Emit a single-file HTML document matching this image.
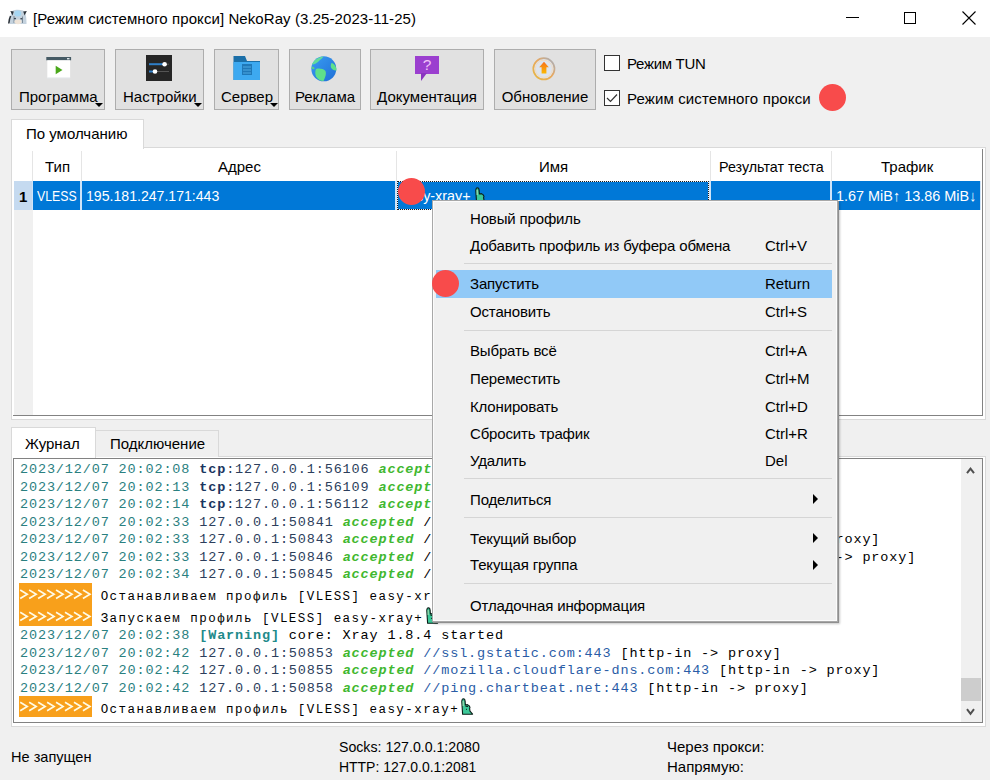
<!DOCTYPE html>
<html><head><meta charset="utf-8">
<style>
*{box-sizing:border-box;margin:0;padding:0}
html,body{width:990px;height:780px;overflow:hidden;background:#f0f0f0;font-family:"Liberation Sans",sans-serif;font-size:15px;color:#000}
.a{position:absolute}
.t{position:absolute;white-space:pre;line-height:1}
#title{left:0;top:0;width:990px;height:37px;background:#fff}
.btn{position:absolute;top:49px;height:61px;background:#e1e1e1;border:1px solid #adadad}
.btn .lbl{position:absolute;left:0;right:0;top:38px;text-align:center;white-space:pre;line-height:17px;color:#000}
.arr{position:absolute;width:0;height:0;border-left:4px solid transparent;border-right:4px solid transparent;border-top:4px solid #000}
.cb{position:absolute;left:604px;width:16px;height:16px;border:1px solid #333;background:#fff}
.hdr{position:absolute;top:151px;height:30px;border-left:1px solid #e5e5e5}
.cell{position:absolute;top:181px;height:29px;background:#0078d7;color:#fff}
.menu{position:absolute;left:432px;top:200px;width:406px;height:422px;background:#f0f0f0;border:1px solid #a8a8a8;box-shadow:inset 1px 1px 0 #fbfbfb,inset -1px -1px 0 #fbfbfb,1px 1px 0 #8f8f8f,2px 2px 2px rgba(0,0,0,0.22)}
.mi{position:absolute;left:37px;white-space:pre;line-height:17px;letter-spacing:-0.15px}
.sc{position:absolute;left:332px;white-space:pre;line-height:17px}
.sep{position:absolute;left:31px;width:368px;height:1px;background:#d5d5d5}
.sub{position:absolute;left:380px;width:0;height:0;border-top:5px solid transparent;border-bottom:5px solid transparent;border-left:5.5px solid #000}
.log{font-family:"Liberation Mono",monospace;font-size:13.5px;letter-spacing:0.86px}
.ru{font-size:12.5px;letter-spacing:1.46px}
.ln{position:absolute;left:20px;white-space:pre;line-height:17.5px;height:17.5px}
.ts{color:#2a8080}
.ip{color:#2c3e5c}
.ac{color:#40b830;font-weight:bold;font-style:italic}
.dm{color:#2a5ca6}
.tcp{color:#1a3560;font-weight:bold}
.warn{color:#218a8a;font-weight:bold}
.or{position:absolute;left:19px;width:73px;background:#f8a01b}
.chev{position:absolute;left:19px;white-space:pre;color:#fff4c0;line-height:21px}
</style></head><body>

<!-- title bar -->
<div id="title" class="a">
  <svg class="a" style="left:0;top:0" width="32" height="32" viewBox="0 0 32 32">
    <path d="M10 24 C10 18 10.5 12 13 10.5 C15 9.5 20 9.5 23 10.5 C26 12 26.5 18 26.5 24 Z" fill="#c4d2de"/>
    <ellipse cx="17.8" cy="13.5" rx="3.5" ry="3" fill="#a6d6f2"/>
    <path d="M10.3 11 L13.8 11.5 L12.5 15.5 Z" fill="#2b323a"/>
    <path d="M26.8 11 L23.2 11.5 L24.6 15.5 Z" fill="#2b323a"/>
    <path d="M10.6 16 C9.6 18 9 20.5 8.8 23.5" stroke="#2b323a" stroke-width="1.6" fill="none"/>
    <path d="M14 16 V23 M22.5 16.5 V23" stroke="#7a8a98" stroke-width="1" fill="none"/>
    <ellipse cx="18" cy="21.8" rx="3.6" ry="2.4" fill="#efe4d8"/>
    <ellipse cx="15" cy="18.6" rx="1.1" ry="0.8" fill="#3a4450"/>
    <ellipse cx="21.3" cy="18.8" rx="1.1" ry="0.8" fill="#3a4450"/>
  </svg>
  <div class="t" style="left:33px;top:11px;color:#000;letter-spacing:0.08px">[Режим системного прокси] NekoRay (3.25-2023-11-25)</div>
  <div class="a" style="left:846px;top:17px;width:13px;height:1px;background:#000"></div>
  <div class="a" style="left:904px;top:12px;width:12px;height:12px;border:1px solid #000"></div>
  <svg class="a" style="left:962px;top:11px" width="14" height="14" viewBox="0 0 14 14"><path d="M0.5 0.5 L13.5 13.5 M13.5 0.5 L0.5 13.5" stroke="#000" stroke-width="1.1"/></svg>
</div>

<!-- toolbar buttons -->
<div class="btn" style="left:11px;width:94px">
  <svg class="a" style="left:33.5px;top:6.8px" width="26" height="23" viewBox="0 0 26 23">
    <rect x="0.3" y="0" width="24.8" height="3.3" fill="#455a64"/>
    <rect x="21" y="1" width="2.5" height="1.4" fill="#dfe6ea"/>
    <rect x="1.3" y="3.3" width="22.8" height="18" fill="#fff"/>
    <rect x="1.3" y="20.6" width="22.8" height="0.8" fill="#d8dde0"/>
    <path d="M9.7 8.8 L16.5 13 L9.7 17.3 Z" fill="#4aa81a"/>
  </svg>
  <div class="lbl" style="left:0;right:auto;width:94px;text-align:left;padding-left:7px">Программа</div>
  <div class="arr" style="left:83px;top:53px"></div>
</div>
<div class="btn" style="left:115px;width:89px">
  <svg class="a" style="left:30px;top:5px" width="26" height="26" viewBox="0 0 26 26">
    <rect width="26" height="26" fill="#262626"/>
    <path d="M3 9.2 H19" stroke="#2f7fc8" stroke-width="2"/>
    <path d="M19 9.2 H23" stroke="#555" stroke-width="1"/>
    <circle cx="18.6" cy="9.2" r="2.3" fill="#fff"/>
    <path d="M3 16.5 H9" stroke="#2f7fc8" stroke-width="2"/>
    <path d="M9 16.5 H23" stroke="#555" stroke-width="1"/>
    <circle cx="9" cy="16.5" r="2.3" fill="#fff"/>
  </svg>
  <div class="lbl" style="text-align:left;padding-left:7px">Настройки</div>
  <div class="arr" style="left:78px;top:53px"></div>
</div>
<div class="btn" style="left:214px;width:65px">
  <svg class="a" style="left:18px;top:6px" width="28" height="25" viewBox="0 0 28 25">
    <path d="M0.5 0 H12 L14 5 H27 V24 H0.5 Z" fill="#1b6fa8"/>
    <rect x="0.5" y="6" width="26.5" height="18" fill="#3da9f0"/>
    <rect x="9" y="8" width="10" height="11" fill="#1f78b8"/>
    <path d="M10 11 H18 M10 14 H18 M10 17 H18" stroke="#5ab6ee" stroke-width="0.8"/>
  </svg>
  <div class="lbl" style="text-align:left;padding-left:6px">Сервер</div>
  <div class="arr" style="left:55px;top:53px"></div>
</div>
<div class="btn" style="left:289px;width:72px">
  <svg class="a" style="left:21px;top:5.5px" width="26" height="26" viewBox="0 0 26 26">
    <defs><linearGradient id="gb" x1="0" y1="0" x2="1" y2="1"><stop offset="0" stop-color="#3a9cf2"/><stop offset="1" stop-color="#1f6fd6"/></linearGradient></defs>
    <circle cx="12.8" cy="12.8" r="12.5" fill="url(#gb)"/>
    <path d="M1 8.5 C2.5 4.5 7 1 12.5 0.5 C11 2.5 9 4 7.5 5.5 C6 7 4 8.5 1 8.5 Z" fill="#62dc9a"/>
    <path d="M1 10.5 C2.5 10.5 4 11.5 3.5 13 C2.5 13.5 1.2 13 0.5 12.5 Z" fill="#55d08a"/>
    <path d="M5 13 C8 12 12 12.5 14.5 15 C15.5 17.5 14.5 21 12.5 25 C9 25 6.5 23 5 20.5 C4 18 4 15 5 13 Z" fill="#5fe08a"/>
    <path d="M20.5 7 C23 7.5 25.5 10.5 25.5 14.5 C23.5 15 21 13.5 20 11.5 C19.5 10 19.8 8 20.5 7 Z" fill="#5fe08a"/>
  </svg>
  <div class="lbl" style="text-align:center">Реклама</div>
</div>
<div class="btn" style="left:370px;width:114px">
  <svg class="a" style="left:44px;top:6px" width="26" height="26" viewBox="0 0 26 26">
    <rect x="0" y="0" width="24" height="18" fill="#9b3fcf"/>
    <path d="M6 17 L6 25 L12 17 Z" fill="#8a35c0"/>
    <text x="12" y="14" font-family="Liberation Sans" font-size="15.5" fill="#f0c4f8" text-anchor="middle">?</text>
  </svg>
  <div class="lbl" style="text-align:center">Документация</div>
</div>
<div class="btn" style="left:494px;width:102px">
  <svg class="a" style="left:36.5px;top:6.5px" width="24" height="24" viewBox="0 0 24 24">
    <defs><linearGradient id="ga" x1="0" y1="0" x2="0" y2="1"><stop offset="0" stop-color="#f7701e"/><stop offset="1" stop-color="#fcb900"/></linearGradient>
    <linearGradient id="gr" x1="1" y1="0" x2="0" y2="1"><stop offset="0" stop-color="#9fb0c8"/><stop offset="0.45" stop-color="#e8a860"/><stop offset="1" stop-color="#e8b840"/></linearGradient></defs>
    <circle cx="11.9" cy="11.8" r="10.6" fill="#dde4ee" stroke="url(#gr)" stroke-width="1.7"/>
    <circle cx="11.9" cy="11.8" r="8.6" fill="none" stroke="#f2dcc0" stroke-width="1"/>
    <path d="M12 4.8 L16.8 10.2 H14.4 V16.5 H9.6 V10.2 H7.2 Z" fill="url(#ga)"/>
  </svg>
  <div class="lbl" style="text-align:center">Обновление</div>
</div>

<!-- checkboxes -->
<div class="cb" style="top:55px"></div>
<div class="t" style="left:627px;top:56px;letter-spacing:-0.3px">Режим TUN</div>
<div class="cb" style="top:90px"><svg class="a" style="left:1px;top:2px" width="12" height="10" viewBox="0 0 12 10"><path d="M1 5 L4.5 8.5 L11 1.5" stroke="#333" stroke-width="1.2" fill="none"/></svg></div>
<div class="t" style="left:627px;top:91px;letter-spacing:0.13px">Режим системного прокси</div>
<div class="a" style="left:819px;top:84px;width:27px;height:27px;border-radius:50%;background:#f84b4b"></div>

<!-- profile tab -->
<div class="a" style="left:11px;top:147px;width:975px;height:273px;background:#fff;border:1px solid #d9d9d9"></div>
<div class="a" style="left:11px;top:119px;width:133px;height:30px;background:#fff;border:1px solid #d9d9d9;border-bottom:none"></div>
<div class="t" style="left:26px;top:126px">По умолчанию</div>

<!-- table -->
<div class="a" style="left:982px;top:149px;width:1px;height:267px;background:#828282"></div>
<div class="a" style="left:13px;top:415px;width:970px;height:1px;background:#828282"></div>
<div class="a" style="left:14px;top:210px;width:19px;height:205px;background:#f0f0f0"></div>
<div class="hdr" style="left:32px;width:49px"></div>
<div class="hdr" style="left:81px;width:315px"></div>
<div class="hdr" style="left:396px;width:314px"></div>
<div class="hdr" style="left:710px;width:121px"></div>
<div class="hdr" style="left:831px;width:150px"></div>
<div class="t" style="left:45px;top:158.5px">Тип</div>
<div class="t" style="left:218px;top:158.5px">Адрес</div>
<div class="t" style="left:539px;top:158.5px">Имя</div>
<div class="t" style="left:719px;top:158.5px;transform:scaleX(0.952);transform-origin:0 0">Результат теста</div>
<div class="t" style="left:881px;top:158.5px">Трафик</div>

<div class="a" style="left:14px;top:181px;width:19px;height:29px;background:#c5daf0"></div>
<div class="t" style="left:19px;top:189px;font-weight:bold">1</div>
<div class="a" style="left:32px;top:181px;width:949px;height:29px;background:#cfe4f8"></div>
<div class="cell" style="left:33px;width:47px"></div>
<div class="cell" style="left:82px;width:313px"></div>
<div class="cell" style="left:397px;width:312px;box-shadow:inset 0 0 0 1px #e6f0fa;outline:1px dotted #1a1a1a;outline-offset:-1px"></div>
<div class="cell" style="left:711px;width:119px"></div>
<div class="cell" style="left:832px;width:148px"></div>
<div class="t" style="left:37px;top:187.5px;color:#fff;transform:scaleX(0.82);transform-origin:0 0">VLESS</div>
<div class="t" style="left:86px;top:187.5px;color:#fff;transform:scaleX(0.94);transform-origin:0 0">195.181.247.171:443</div>
<div class="t" style="left:400px;top:187.5px;color:#fff;transform:scaleX(0.957);transform-origin:0 0">easy-xray+</div>
<svg class="a" style="left:473.5px;top:186.5px" width="14" height="17" viewBox="0 0 14 17"><path d="M2.6 16.2 L1.8 3.6 Q1.8 0.9 3.4 0.8 Q5 0.8 5.1 3.4 L5.4 7 L7.4 6.6 L9 7.6 L10 9.2 L9.6 10.6 L10 13.2 L12.6 16.2 Z" fill="#3cc898" stroke="#0b1e18" stroke-width="1.1" stroke-linejoin="round"/><path d="M3.2 3 V8" stroke="#9fdcb0" stroke-width="1.2"/></svg>
<div class="t" style="left:836px;top:187.5px;color:#fff;transform:scaleX(0.962);transform-origin:0 0">1.67 MiB<b>↑</b> 13.86 MiB<b>↓</b></div>
<div class="a" style="left:398px;top:178px;width:27px;height:27px;border-radius:50%;background:#f84b4b"></div>

<!-- log tabs -->
<div class="a" style="left:11px;top:456px;width:975px;height:271px;background:#fff;border:1px solid #d9d9d9"></div>
<div class="a" style="left:95px;top:430px;width:124px;height:27px;background:#f0f0f0;border:1px solid #d9d9d9;border-bottom:none"></div>
<div class="a" style="left:11px;top:427px;width:85px;height:31px;background:#fff;border:1px solid #d9d9d9;border-bottom:none"></div>
<div class="t" style="left:25px;top:436px">Журнал</div>
<div class="t" style="left:110px;top:436px">Подключение</div>

<!-- log text -->
<div class="a" style="left:13px;top:458px;width:970px;height:265px;background:#fff;border:1px solid #828282;overflow:hidden">
 <div class="a log" style="left:-14px;top:-459px;width:990px;height:780px">
<div class="ln" style="top:461.4px"><span class="ts">2023/12/07 20:02:08 </span><span class="tcp">tcp</span><span class="ip">:127.0.0.1:56106 </span><span class="ac">accepted</span></div>
<div class="ln" style="top:478.9px"><span class="ts">2023/12/07 20:02:13 </span><span class="tcp">tcp</span><span class="ip">:127.0.0.1:56109 </span><span class="ac">accepted</span></div>
<div class="ln" style="top:496.4px"><span class="ts">2023/12/07 20:02:14 </span><span class="tcp">tcp</span><span class="ip">:127.0.0.1:56112 </span><span class="ac">accepted</span></div>
<div class="ln" style="top:513.9px"><span class="ts">2023/12/07 20:02:33 </span><span class="ip">127.0.0.1:50841 </span><span class="ac">accepted</span> /</div>
<div class="ln" style="top:531.4px"><span class="ts">2023/12/07 20:02:33 </span><span class="ip">127.0.0.1:50843 </span><span class="ac">accepted</span> /                                             roxy]</div>
<div class="ln" style="top:548.9px"><span class="ts">2023/12/07 20:02:33 </span><span class="ip">127.0.0.1:50846 </span><span class="ac">accepted</span> /                                             -&gt; proxy]</div>
<div class="ln" style="top:566.4px"><span class="ts">2023/12/07 20:02:34 </span><span class="ip">127.0.0.1:50845 </span><span class="ac">accepted</span> /</div>
<div class="or" style="top:583px;height:42.7px"></div>
<div class="or" style="top:696.1px;height:20.6px"></div>
<svg class="a" style="left:0;top:0" width="990" height="780"><path d="M20.20 590.10 L27.20 594.30 L20.20 598.50 M29.16 590.10 L36.16 594.30 L29.16 598.50 M38.12 590.10 L45.12 594.30 L38.12 598.50 M47.08 590.10 L54.08 594.30 L47.08 598.50 M56.04 590.10 L63.04 594.30 L56.04 598.50 M65.00 590.10 L72.00 594.30 L65.00 598.50 M73.96 590.10 L80.96 594.30 L73.96 598.50 M82.92 590.10 L89.92 594.30 L82.92 598.50 " stroke="#fffbe6" stroke-width="1.7" fill="none"/></svg>
<svg class="a" style="left:0;top:0" width="990" height="780"><path d="M20.20 612.20 L27.20 616.40 L20.20 620.60 M29.16 612.20 L36.16 616.40 L29.16 620.60 M38.12 612.20 L45.12 616.40 L38.12 620.60 M47.08 612.20 L54.08 616.40 L47.08 620.60 M56.04 612.20 L63.04 616.40 L56.04 620.60 M65.00 612.20 L72.00 616.40 L65.00 620.60 M73.96 612.20 L80.96 616.40 L73.96 620.60 M82.92 612.20 L89.92 616.40 L82.92 620.60 " stroke="#fffbe6" stroke-width="1.7" fill="none"/></svg>
<svg class="a" style="left:0;top:0" width="990" height="780"><path d="M20.20 702.30 L27.20 706.50 L20.20 710.70 M29.16 702.30 L36.16 706.50 L29.16 710.70 M38.12 702.30 L45.12 706.50 L38.12 710.70 M47.08 702.30 L54.08 706.50 L47.08 710.70 M56.04 702.30 L63.04 706.50 L56.04 710.70 M65.00 702.30 L72.00 706.50 L65.00 710.70 M73.96 702.30 L80.96 706.50 L73.96 710.70 M82.92 702.30 L89.92 706.50 L82.92 710.70 " stroke="#fffbe6" stroke-width="1.7" fill="none"/></svg>
<div class="ln" style="top:587.5px"><span class="ru">         Останавливаем профиль [VLESS] easy-xr</span></div>
<div class="ln" style="top:609.5px"><span class="ru">         Запускаем профиль [VLESS] easy-xray+</span></div>
<svg class="a" style="left:425px;top:607px" width="14" height="17" viewBox="0 0 14 17"><path d="M2.6 16.2 L1.8 3.6 Q1.8 0.9 3.4 0.8 Q5 0.8 5.1 3.4 L5.4 7 L7.4 6.6 L9 7.6 L10 9.2 L9.6 10.6 L10 13.2 L12.6 16.2 Z" fill="#3cc898" stroke="#0b1e18" stroke-width="1.1" stroke-linejoin="round"/><path d="M3.2 3 V8" stroke="#9fdcb0" stroke-width="1.2"/><path d="M5.4 8.2 L8 8.6 M6 11 L7 11.6" stroke="#0b1e18" stroke-width="1"/></svg>
<div class="ln" style="top:626.6px"><span class="ts">2023/12/07 20:02:38 </span><span class="warn">[Warning]</span> core: Xray 1.8.4 started</div>
<div class="ln" style="top:644.5px"><span class="ts">2023/12/07 20:02:42 </span><span class="ip">127.0.0.1:50853 </span><span class="ac">accepted</span> <span class="dm">//ssl.gstatic.com:443</span> [http-in -&gt; proxy]</div>
<div class="ln" style="top:662.4px"><span class="ts">2023/12/07 20:02:42 </span><span class="ip">127.0.0.1:50855 </span><span class="ac">accepted</span> <span class="dm">//mozilla.cloudflare-dns.com:443</span> [http-in -&gt; proxy]</div>
<div class="ln" style="top:680.3px"><span class="ts">2023/12/07 20:02:42 </span><span class="ip">127.0.0.1:50858 </span><span class="ac">accepted</span> <span class="dm">//ping.chartbeat.net:443</span> [http-in -&gt; proxy]</div>
<div class="ln" style="top:700.5px"><span class="ru">         Останавливаем профиль [VLESS] easy-xray+</span></div>
<svg class="a" style="left:460px;top:698px" width="14" height="17" viewBox="0 0 14 17"><path d="M2.6 16.2 L1.8 3.6 Q1.8 0.9 3.4 0.8 Q5 0.8 5.1 3.4 L5.4 7 L7.4 6.6 L9 7.6 L10 9.2 L9.6 10.6 L10 13.2 L12.6 16.2 Z" fill="#3cc898" stroke="#0b1e18" stroke-width="1.1" stroke-linejoin="round"/><path d="M3.2 3 V8" stroke="#9fdcb0" stroke-width="1.2"/><path d="M5.4 8.2 L8 8.6 M6 11 L7 11.6" stroke="#0b1e18" stroke-width="1"/></svg>

 </div>
 <!-- scrollbar -->
 <div class="a" style="left:947px;top:0;width:21px;height:263px;background:#f0f0f0"></div>
 <div class="a" style="left:947px;top:219px;width:19.5px;height:22.8px;background:#cdcdcd"></div>
 <svg class="a" style="left:940px;top:0" width="30" height="263"><path d="M13 14.2 L16.5 9.6 L20 14.2 M13 250.2 L16.5 254.8 L20 250.2" stroke="#505050" stroke-width="2" fill="none"/></svg>
</div>

<!-- status bar -->
<div class="t" style="left:11px;top:748.5px;transform:scaleX(0.97);transform-origin:0 0">Не запущен</div>
<div class="t" style="left:339px;top:738.7px;transform:scaleX(0.943);transform-origin:0 0">Socks: 127.0.0.1:2080</div>
<div class="t" style="left:339px;top:758.8px;transform:scaleX(0.93);transform-origin:0 0">HTTP: 127.0.0.1:2081</div>
<div class="t" style="left:667px;top:738.7px">Через прокси:</div>
<div class="t" style="left:667px;top:758.8px">Напрямую:</div>

<!-- context menu -->
<div class="menu">
  <div class="mi" style="top:8.9px">Новый профиль</div>
  <div class="mi" style="top:35.5px">Добавить профиль из буфера обмена</div><div class="sc" style="top:35.5px">Ctrl+V</div>
  <div class="sep" style="top:62px"></div>
  <div class="a" style="left:3px;top:69.4px;width:396px;height:27.5px;background:#91c9f7"></div>
  <div class="mi" style="top:74.3px">Запустить</div><div class="sc" style="top:74.3px">Return</div>
  <div class="mi" style="top:101.5px">Остановить</div><div class="sc" style="top:101.5px">Ctrl+S</div>
  <div class="sep" style="top:129px"></div>
  <div class="mi" style="top:141px">Выбрать всё</div><div class="sc" style="top:141px">Ctrl+A</div>
  <div class="mi" style="top:169.2px">Переместить</div><div class="sc" style="top:169.2px">Ctrl+M</div>
  <div class="mi" style="top:196.6px">Клонировать</div><div class="sc" style="top:196.6px">Ctrl+D</div>
  <div class="mi" style="top:224.0px">Сбросить трафик</div><div class="sc" style="top:224.0px">Ctrl+R</div>
  <div class="mi" style="top:251.4px">Удалить</div><div class="sc" style="top:251.4px">Del</div>
  <div class="sep" style="top:277px"></div>
  <div class="mi" style="top:290.4px">Поделиться</div><div class="sub" style="top:292.7px"></div>
  <div class="sep" style="top:316px"></div>
  <div class="mi" style="top:329.4px">Текущий выбор</div><div class="sub" style="top:331.9px"></div>
  <div class="mi" style="top:355.3px">Текущая группа</div><div class="sub" style="top:358.8px"></div>
  <div class="sep" style="top:382px"></div>
  <div class="mi" style="top:395.8px">Отладочная информация</div>
</div>
<div class="a" style="left:432px;top:270px;width:27px;height:27px;border-radius:50%;background:#f84b4b"></div>

</body></html>
